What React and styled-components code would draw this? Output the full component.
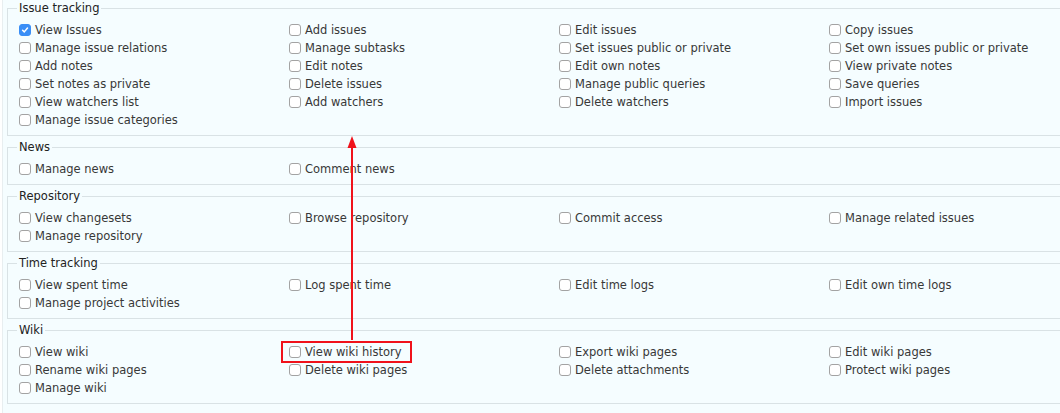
import React from 'react'
import styled, { createGlobalStyle } from 'styled-components'

const GlobalStyle = createGlobalStyle`
  html, body {
    margin: 0;
    padding: 0;
    background: #ffffff;
    overflow: hidden;
  }
`

const Page = styled.div`
  position: relative;
  margin-left: 2px;
  width: 1120px;
  min-height: 413px;
  padding: 1px 0 0 4px;
  box-sizing: border-box;
  background: #f5fdff;
  border-left: 1px solid #e8eef0;
  font-family: 'DejaVu Sans', 'Liberation Sans', sans-serif;
  font-size: 11.5px;
  color: #383838;
`

const Group = styled.fieldset`
  margin: 0 0 4px 0;
  padding: 6px 0 6px 11px;
  border: 1px solid #d9e2e5;
  min-width: 0;
`

const Legend = styled.legend`
  padding: 0 2px;
  margin-left: -2px;
  font-size: 11.5px;
  color: #222;
  line-height: 14px;
`

const Grid = styled.div`
  display: grid;
  grid-template-columns: repeat(4, 270px);
`

const Item = styled.label`
  position: relative;
  display: flex;
  align-items: center;
  height: 18px;
  white-space: nowrap;
  justify-self: start;
  ${p => p.$marked && `
    &::before {
      content: '';
      position: absolute;
      left: -8px;
      right: -10px;
      top: -2px;
      bottom: -2px;
      border: 2px solid #f0121b;
    }
  `}
`

const Box = styled.span`
  width: 10px;
  height: 10px;
  margin-right: 4px;
  border-radius: 3px;
  border: 1px solid ${p => (p.$checked ? '#3a8ef6' : '#a3a3a3')};
  background: ${p => (p.$checked ? '#3a8ef6' : '#ffffff')};
  display: flex;
  align-items: center;
  justify-content: center;
  flex: none;
`

const Arrow = styled.svg`
  position: absolute;
  left: 0;
  top: 0;
  pointer-events: none;
`

const groups = [
  {
    title: 'Issue tracking',
    items: [
      'View Issues', 'Add issues', 'Edit issues', 'Copy issues',
      'Manage issue relations', 'Manage subtasks', 'Set issues public or private', 'Set own issues public or private',
      'Add notes', 'Edit notes', 'Edit own notes', 'View private notes',
      'Set notes as private', 'Delete issues', 'Manage public queries', 'Save queries',
      'View watchers list', 'Add watchers', 'Delete watchers', 'Import issues',
      'Manage issue categories',
    ],
  },
  { title: 'News', items: ['Manage news', 'Comment news'] },
  {
    title: 'Repository',
    items: ['View changesets', 'Browse repository', 'Commit access', 'Manage related issues', 'Manage repository'],
  },
  {
    title: 'Time tracking',
    items: ['View spent time', 'Log spent time', 'Edit time logs', 'Edit own time logs', 'Manage project activities'],
  },
  {
    title: 'Wiki',
    items: [
      'View wiki', 'View wiki history', 'Export wiki pages', 'Edit wiki pages',
      'Rename wiki pages', 'Delete wiki pages', 'Delete attachments', 'Protect wiki pages',
      'Manage wiki',
    ],
  },
]

function Check({ checked }) {
  return (
    <Box $checked={checked}>
      {checked && (
        <svg width="8" height="8" viewBox="0 0 9 9">
          <path d="M1.8 4.8 L3.7 6.6 L7.3 2.3" fill="none" stroke="#fff" strokeWidth="1.7" strokeLinecap="round" strokeLinejoin="round" />
        </svg>
      )}
    </Box>
  )
}

export default function App() {
  return (
    <>
      <GlobalStyle />
      <Page>
        {groups.map(g => (
          <Group key={g.title}>
            <Legend>{g.title}</Legend>
            <Grid>
              {g.items.map(label => (
                <Item key={label} $marked={label === 'View wiki history'}>
                  <Check checked={label === 'View Issues'} />
                  {label}
                </Item>
              ))}
            </Grid>
          </Group>
        ))}
        <Arrow width="1060" height="413" viewBox="0 0 1060 413">
          <line x1="349" y1="340" x2="349" y2="146" stroke="#f0121b" strokeWidth="2" />
          <polygon points="349,136 344.5,148 353.5,148" fill="#f0121b" />
        </Arrow>
      </Page>
    </>
  )
}
